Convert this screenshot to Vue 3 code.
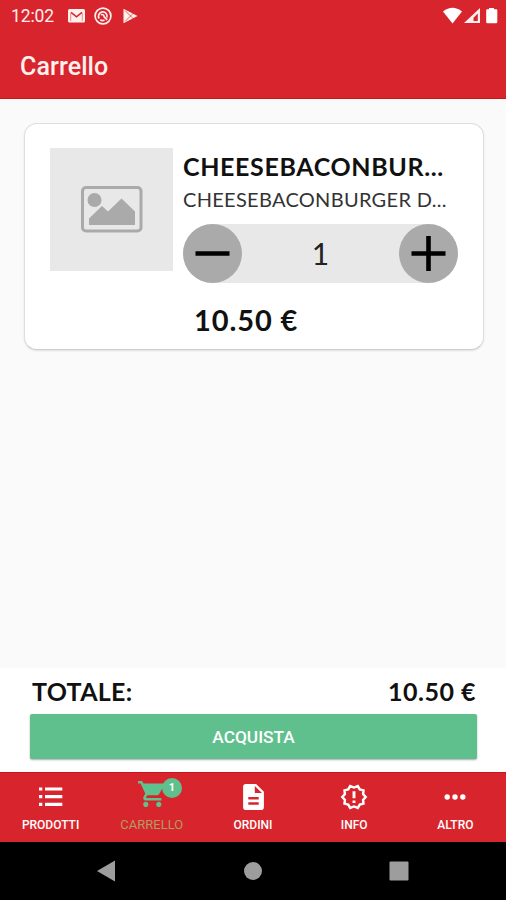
<script setup>
const product = {
  name: 'CHEESEBACONBUR...',
  description: 'CHEESEBACONBURGER D...',
  quantity: 1,
  price: '10.50 €',
}
const tabs = [
  { id: 'list', label: 'PRODOTTI' },
  { id: 'cart', label: 'CARRELLO', badge: 1 },
  { id: 'orders', label: 'ORDINI' },
  { id: 'info', label: 'INFO' },
  { id: 'more', label: 'ALTRO' },
]
</script>

<template>
  <div class="screen">
    <header class="top">
      <div class="status">
        <span class="clock">12:02</span>
        <svg class="mail" width="17" height="14" viewBox="0 0 17 14">
          <rect width="17" height="13.5" rx="1.5" fill="#fff0ee" />
          <path d="M3 3.300L8.500 7.800l5.500-4.500" fill="none" stroke="#d8252d" stroke-width="1.500" />
          <path d="M2.700 4v8M14.300 4v8" stroke="#d8252d" stroke-width=".5" />
        </svg>
        <svg class="sync" width="18" height="18" viewBox="0 0 18 18" fill="none" stroke="#fff0ee">
          <circle cx="9" cy="9" r="7.900" stroke-width="1.700" />
          <path d="M5.200 11.500A4.300 4.300 0 1 1 12.900 10.500M6.800 7.600q3-.6 3.400 2.200l3 3M6.300 12.800q2.200 1.500 4.200.1" stroke-width="1.700" />
        </svg>
        <svg class="play" width="15" height="16" viewBox="0 0 15 16">
          <path d="M.5.8 14.5 8 .5 15.2z" fill="#fff0ee" />
          <path d="M2 2.500 10.500 11M2 13.500 10.500 5" stroke="#d8252d" stroke-width=".7" />
        </svg>
        <svg class="signals" width="54" height="18" viewBox="0 0 54 18">
          <path d="M0 4.500Q9.500-3 19 4.500L9.500 16.500z" fill="#fff" />
          <path d="M37 1v15H21z" fill="#fff0ee" />
          <path d="M34.800 6.500V14h-4.300v-3.200z" fill="#d8252d" />
          <path d="M46 1h5v1.300h2.300q1 0 1 1V15q0 1.300-1.300 1.300h-8.500q-1.300 0-1.300-1.300V3.300q0-1 1-1H46z" fill="#fff" />
        </svg>
      </div>
      <h1>Carrello</h1>
    </header>

    <main>
      <article class="card">
        <div class="thumb">
          <svg width="62" height="47" viewBox="0 0 62 47">
            <rect x="1.500" y="1.500" width="58.500" height="43.500" rx="3.500" fill="none" stroke="#aaa" stroke-width="3" />
            <circle cx="13.500" cy="14" r="7" fill="#aaa" />
            <path d="M8 39v-6.500L21 20l6 5.500L40.500 12.500 54 25.500V39z" fill="#aaa" />
          </svg>
        </div>
        <div class="details">
          <h2>{{ product.name }}</h2>
          <p class="description">{{ product.description }}</p>
          <div class="stepper">
            <button aria-label="-">
              <svg width="59" height="59" viewBox="0 0 59 59"><path d="M12.500 29.500h34" stroke="#000" stroke-width="4.600" /></svg>
            </button>
            <span class="quantity">{{ product.quantity }}</span>
            <button aria-label="+">
              <svg width="59" height="59" viewBox="0 0 59 59"><path d="M12.500 29.500h34M29.500 12v35" stroke="#000" stroke-width="4.600" /></svg>
            </button>
          </div>
          <p class="price">{{ product.price }}</p>
        </div>
      </article>
    </main>

    <section class="checkout">
      <div class="total"><span class="total-label">TOTALE:</span><span class="amount">{{ product.price }}</span></div>
      <button class="buy">ACQUISTA</button>
    </section>

    <nav class="tabs">
      <div v-for="tab in tabs" :key="tab.id" class="tab" :class="tab.id">
        <div class="icon">
          <svg v-if="tab.id === 'list'" width="24" height="20" viewBox="0 0 24 20" fill="#fff">
            <path d="M0 .4h3.300v3.200H0zM6 .4h17.300v3.200H6zM0 8.100h3.300v3.200H0zM6 8.100h17.300v3.200H6zM0 15.800h3.300V19H0zM6 15.800h17.300V19H6z" />
          </svg>
          <svg v-else-if="tab.id === 'cart'" width="26" height="26" viewBox="1 2 20 20" fill="#5fc18e">
            <path d="M7 18c-1.100 0-1.990.9-1.990 2S5.900 22 7 22s2-.9 2-2-.9-2-2-2zM1 2v2h2l3.600 7.590-1.350 2.450c-.16.28-.25.61-.25.96 0 1.100.9 2 2 2h12v-2H7.420c-.14 0-.25-.11-.25-.25l.03-.12.900-1.630h7.450c.75 0 1.410-.41 1.750-1.030l3.580-6.490A1 1 0 0 0 20.010 4H5.210l-.94-2H1zm16 16c-1.100 0-1.990.9-1.990 2s.89 2 1.990 2 2-.9 2-2-.9-2-2-2z" />
          </svg>
          <svg v-else-if="tab.id === 'orders'" width="21" height="26" viewBox="4 2 16 20" fill="#fff">
            <path d="M14 2H6c-1.100 0-1.990.9-1.990 2L4 20c0 1.100.89 2 1.990 2H18c1.100 0 2-.9 2-2V8l-6-6zm2 16H8v-2h8v2zm0-4H8v-2h8v2zm-3-5V3.500L18.500 9H13z" />
          </svg>
          <svg v-else-if="tab.id === 'info'" width="28" height="28" viewBox="0 0 24 24">
            <path d="M22 12l-2.200-2.450.35-3.250-3.200-.75-1.700-2.900L12 3.900 8.750 2.650 7.050 5.550l-3.200.75.35 3.250L2 12l2.200 2.450-.35 3.250 3.200.75 1.700 2.900L12 20.100l3.250 1.250 1.700-2.900 3.200-.75-.35-3.250z" fill="none" stroke="#fff" stroke-width="2.100" />
            <path d="M12 7v6M12 15v2.200" stroke="#fff" stroke-width="2.500" />
          </svg>
          <svg v-else width="22" height="6" viewBox="0 0 22 6" fill="#fff">
            <circle cx="3.200" cy="3" r="2.700" /><circle cx="11" cy="3" r="2.700" /><circle cx="18.800" cy="3" r="2.700" />
          </svg>
          <span v-if="tab.badge" class="badge">{{ tab.badge }}</span>
        </div>
        <span class="tab-label">{{ tab.label }}</span>
      </div>
    </nav>

    <footer class="system">
      <svg width="18" height="22" viewBox="0 0 18 22"><path d="M18 .5v21L0 11z" fill="#9d9d9d" /></svg>
      <svg width="18" height="18" viewBox="0 0 18 18"><circle cx="9" cy="9" r="9" fill="#9d9d9d" /></svg>
      <svg width="20" height="20" viewBox="0 0 20 20"><rect x=".5" y=".5" width="19" height="19" rx="1" fill="#9d9d9d" /></svg>
    </footer>
  </div>
</template>

<style>
body { margin: 0; }
</style>

<style scoped>
* { box-sizing: border-box; }
h1, h2, p { margin: 0; font-size: inherit; }
button { border: 0; padding: 0; font: inherit; }
svg { display: block; flex: none; overflow: visible; }
.screen {
  display: flex; flex-direction: column; width: 506px; height: 900px;
  overflow: hidden; background: #fafafa; font-family: Roboto, sans-serif;
}
.top { height: 99px; flex: none; background: #d8252d; color: #fff0ee; border-bottom: 1px solid #c8121c; }
.status { display: flex; align-items: center; height: 32px; padding: 0 8px 0 11px; }
.clock { width: 57px; font-size: 17.500px; line-height: 32px; letter-spacing: -.1px; }
.sync { margin-left: 9px; }
.play { margin-left: 11px; }
.signals { margin-left: auto; margin-right: 1px; }
h1 { padding-left: 20px; font-size: 25px; line-height: 69px; font-weight: 500; letter-spacing: .1px; }
main { flex: 1; padding: 24px 22px 0 24px; }
.card {
  display: flex; gap: 10px; width: 460px; height: 227px; padding: 24px 24px 0 25px;
  border: 1px solid #dedede; border-bottom-color: #cecece; border-radius: 13px;
  background: #fff; box-shadow: 0 1px 2px #0000001c; color: #111;
  font-family: Lato, sans-serif;
}
.thumb { display: flex; align-items: center; justify-content: center; width: 123px; height: 123px; flex: none; background: #e8e8e8; }
.details { width: 275px; flex: none; white-space: nowrap; }
h2 { height: 36px; font-size: 25px; line-height: 36px; font-weight: 700; letter-spacing: .63px; }
.description { height: 40px; font-size: 20px; line-height: 31px; letter-spacing: .3px; color: #333; }
.stepper { display: flex; align-items: center; justify-content: space-between; height: 59px; border-radius: 30px; background: #e8e8e8; }
.stepper button { width: 59px; height: 59px; border-radius: 50%; background: #aaa; }
.quantity { font-size: 30px; line-height: 61px; color: #222; }
.price { padding-left: 11px; font-size: 29px; line-height: 73px; font-weight: 700; letter-spacing: .9px; }
.checkout { height: 104px; flex: none; padding: 0 29px 0 30px; background: #fff; }
.total { display: flex; justify-content: space-between; height: 46px; padding: 0 1px 0 2px; font: 700 25px/46px Lato, sans-serif; color: #111; }
.total-label { letter-spacing: .3px; }
.amount { letter-spacing: .5px; }
.buy {
  display: block; width: 100%; height: 45px; border-radius: 2px; background: #5fc08d; color: #fff;
  font: 500 17.300px/47px Roboto, sans-serif; box-shadow: 0 1px 2px #0005;
}
.tabs { display: flex; height: 70px; flex: none; background: #d8252d; border-top: 1px solid #c8121c; color: #fff; }
.tab { display: flex; flex: 1; flex-direction: column; align-items: center; }
.icon { position: relative; display: flex; align-items: center; justify-content: center; height: 43px; margin-top: 2px; }
.tab-label { font-size: 12px; line-height: 14px; font-weight: 500; }
.cart .icon { padding: 0 2px 5px 0; }
.cart .tab-label { color: #b39a62; font-size: 13px; font-weight: 400; }
.badge {
  position: absolute; left: 24px; top: 3px; width: 20px; height: 20px; border-radius: 50%;
  background: #5fc08d; font-size: 11px; line-height: 20px; font-weight: 700; text-align: center; color: #fff;
}
.system { display: grid; grid-template-columns: 212px 82px 210px; align-items: center; justify-items: center; height: 58px; flex: none; background: #000; }
</style>
